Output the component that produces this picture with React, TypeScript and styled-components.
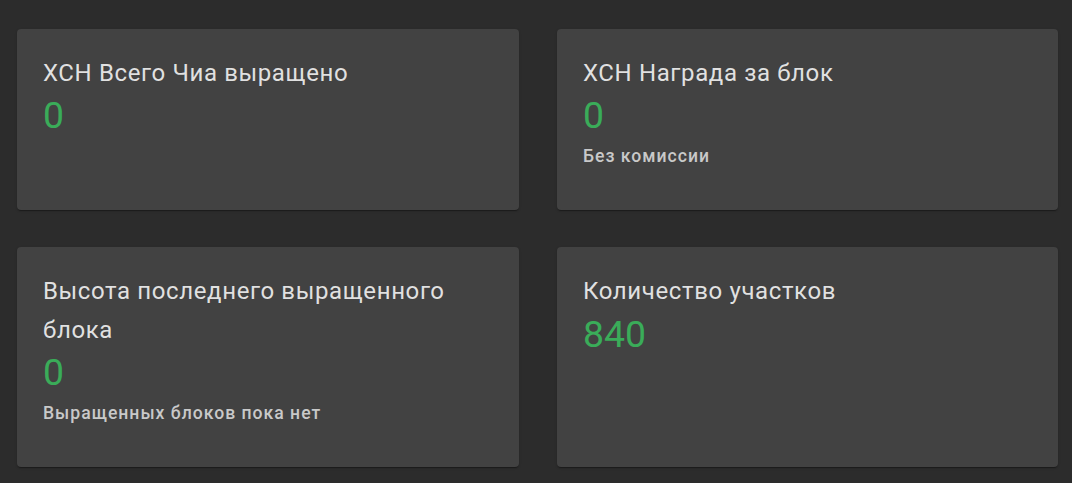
import React from 'react'
import styled, { createGlobalStyle } from 'styled-components'

const GlobalStyle = createGlobalStyle`
  html, body {
    margin: 0;
    padding: 0;
    background-color: #2c2c2c;
    font-family: Roboto, "Liberation Sans", Arial, sans-serif;
  }
`

const Page = styled.div`
  box-sizing: border-box;
  width: 1072px;
  min-height: 483px;
  padding: 29px 14px 0 17px;
  display: grid;
  grid-template-columns: 502px 501px;
  column-gap: 38px;
  row-gap: 37px;
  align-content: start;
`

const Card = styled.div`
  box-sizing: border-box;
  background-color: #424242;
  border-radius: 4px;
  box-shadow: 0 2px 1px -1px rgba(0, 0, 0, 0.2), 0 1px 1px 0 rgba(0, 0, 0, 0.14),
    0 1px 3px 0 rgba(0, 0, 0, 0.12);
  padding: 25px 26px 43px 26px;
  display: flex;
  flex-direction: column;
`

const Title = styled.div`
  font-size: 24px;
  line-height: 38.4px;
  font-weight: 400;
  letter-spacing: 0.62px;
  color: rgba(255, 255, 255, 0.85);
`

const Value = styled.div`
  font-size: 37.4px;
  line-height: 46px;
  font-weight: 400;
  color: #3aac59;
`

const Note = styled.div`
  margin-top: 7px;
  font-size: 17.6px;
  line-height: 22px;
  font-weight: 500;
  letter-spacing: 1px;
  color: rgba(255, 255, 255, 0.72);
`

interface Stat {
  title: string
  value: string
  note?: string
}

const stats: Stat[] = [
  { title: 'XCH Всего Чиа выращено', value: '0' },
  { title: 'XCH Награда за блок', value: '0', note: 'Без комиссии' },
  {
    title: 'Высота последнего выращенного блока',
    value: '0',
    note: 'Выращенных блоков пока нет',
  },
  { title: 'Количество участков', value: '840' },
]

function App() {
  return (
    <>
      <GlobalStyle />
      <Page>
        {stats.map(({ title, value, note }) => (
          <Card key={title}>
            <Title>{title}</Title>
            <Value>{value}</Value>
            {note && <Note>{note}</Note>}
          </Card>
        ))}
      </Page>
    </>
  )
}

export default App
